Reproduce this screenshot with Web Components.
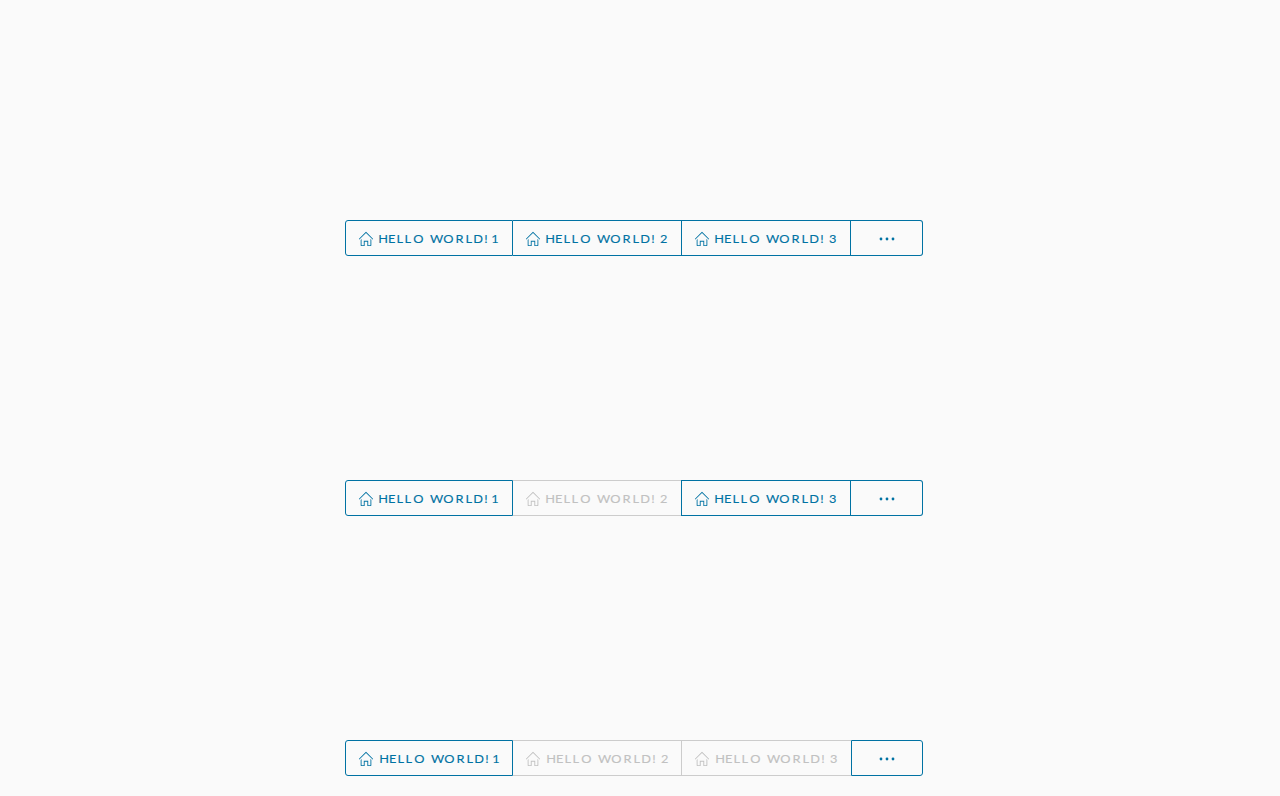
<!DOCTYPE html>
<html lang="en">
<head>
<meta charset="utf-8">
<title>Button groups</title>
<style>
body { margin: 0; background: #fafafa; font-family: Lato, "Liberation Sans", sans-serif; }
</style>
</head>
<body>
<button-demo></button-demo>
<script>
class GroupButton extends HTMLElement {
  connectedCallback() {
    const more = this.hasAttribute('more');
    const num = this.getAttribute('num');
    const scale = 1.12;
    const tracking = [0.3, 10.1, 18.4, 26.4, 35.3, 46, 52, 65.3, 77.4, 87.6, 95.2, 106.2, 110, num === '1' ? 113.2 : 115.1]
      .map(x => (x / scale).toFixed(2)).join(' ');
    const content = more
      ? `<svg class="dots" width="16" height="16" viewBox="0 0 16 16"><circle cx="2" cy="8" r="1.4"/><circle cx="8" cy="8" r="1.4"/><circle cx="14" cy="8" r="1.4"/></svg>`
      : `<svg class="home" width="16" height="16" viewBox="0 0 36 36"><path d="M33.71 17.29l-15-15a1 1 0 0 0-1.41 0l-15 15a1 1 0 0 0 1.41 1.41L18 4.41l14.29 14.3a1 1 0 0 0 1.41-1.41z"/><path d="M28 32h-5V22H13v10H8V18l-2 2v12a2 2 0 0 0 2 2h7V24h6v10h7a2 2 0 0 0 2-2V19.76l-2-2z"/></svg>
         <svg class="label" width="122" height="16" viewBox="0 0 122 16"><text transform="scale(${scale} 1)" x="${tracking}" y="12">HELLO WORLD! ${num}</text></svg>`;
    this.attachShadow({ mode: 'open' }).innerHTML = `
      <style>
        :host { display: block; box-sizing: border-box; height: 36px; color: #0072a3;
          border: solid #0072a3; border-width: 1px 1px 1px 0; }
        :host([disabled]) { color: #c1c1c1; border-color: #ccc; }
        :host([first]) { border-left-width: 1px; border-radius: 3px 0 0 3px; }
        :host([more]) { border-radius: 0 3px 3px 0; }
        :host([lead]) { border-left-width: 1px; }
        :host([open-end]) { border-right-width: 0; }
        button { all: unset; display: flex; box-sizing: border-box; width: 100%; height: 100%;
          align-items: center; padding: 2px 0 0 12px; }
        :host([more]) button { justify-content: center; padding: 2px 0 0; }
        :host([more][lead]) button { padding-right: 1px; }
        svg { display: block; flex: none; fill: currentColor; }
        .label { margin-left: var(--label-gap, 4px); overflow: visible; }
        text { font-size: 11.4px; stroke: currentColor; stroke-width: .12px; }
      </style>
      <button type="button" ${this.hasAttribute('disabled') ? 'disabled' : ''}>${content}</button>`;
  }
}
customElements.define('group-button', GroupButton);

class ButtonGroup extends HTMLElement {
  connectedCallback() {
    this.attachShadow({ mode: 'open' }).innerHTML = `
      <style>
        :host { display: grid; width: 578px; grid-template-columns: var(--cols, 168px 169px 169px 72px); }
      </style><slot></slot>`;
  }
}
customElements.define('button-group', ButtonGroup);

class ButtonDemo extends HTMLElement {
  connectedCallback() {
    this.attachShadow({ mode: 'open' }).innerHTML = `
      <style>
        :host { display: flex; flex-direction: column; box-sizing: border-box; height: 796px;
          padding: 220px 0 0 345px; gap: 224px; overflow: hidden; }
        .mid { --cols: 168px 168px 170px 72px; }
        .last { --label-gap: 4.5px; }
      </style>
      <button-group>
        <group-button first num="1"></group-button><group-button num="2"></group-button>
        <group-button num="3"></group-button><group-button more></group-button>
      </button-group>
      <button-group class="mid">
        <group-button first num="1"></group-button><group-button num="2" disabled open-end></group-button>
        <group-button num="3" lead></group-button><group-button more></group-button>
      </button-group>
      <button-group class="last">
        <group-button first num="1"></group-button><group-button num="2" disabled></group-button>
        <group-button num="3" disabled open-end></group-button><group-button more lead></group-button>
      </button-group>`;
  }
}
customElements.define('button-demo', ButtonDemo);
</script>
</body>
</html>
